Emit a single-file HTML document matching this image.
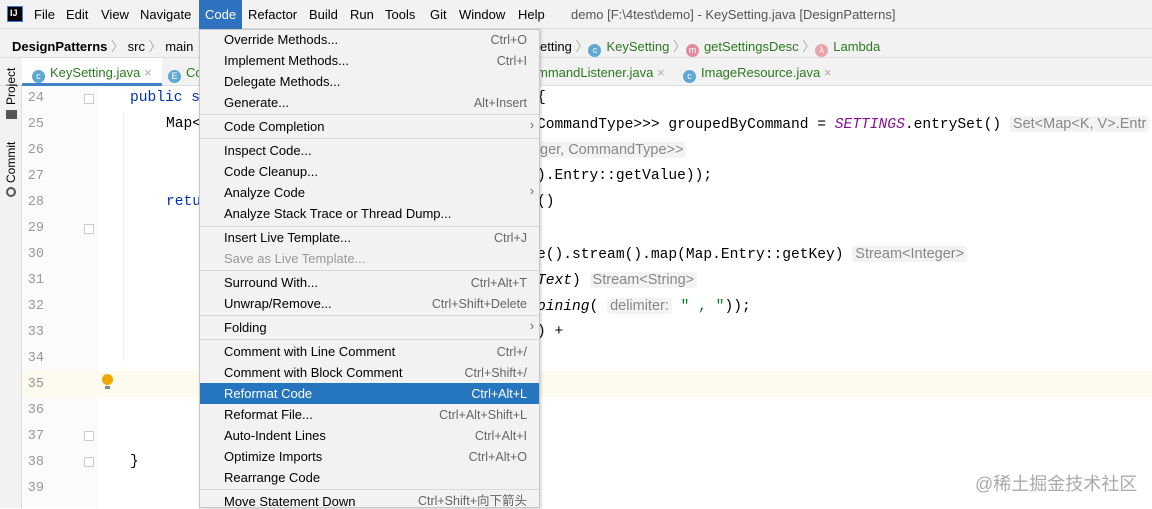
<!DOCTYPE html>
<html><head><meta charset="utf-8"><style>
*{margin:0;padding:0;box-sizing:border-box}
body{width:1152px;height:508px;overflow:hidden;background:#fff;font-family:"Liberation Sans","Noto Sans CJK SC",sans-serif;font-size:13px;color:#000;position:relative}
.a{position:absolute;white-space:nowrap}
.mono{font-family:"Liberation Mono",monospace;font-size:14.6px}
.ln{position:absolute;left:22px;width:22px;text-align:right;color:#999;font-family:"Liberation Mono",monospace;font-size:13.5px}
.hint{background:#f3f3f3;color:#888;font-family:"Liberation Sans",sans-serif;font-size:14.5px;padding:0 3px;border-radius:3px}
.mi{position:absolute;left:224px;font-size:13px;color:#000}
.sc{position:absolute;right:625px;font-size:12.5px;color:#666;text-align:right}
.sep{position:absolute;left:200px;width:339px;height:1px;background:#d8d8d8}
.ic{display:inline-block;width:13px;height:13px;border-radius:50%;color:#fff;font-size:9px;text-align:center;line-height:13px;vertical-align:-2px;margin-right:5px}
</style></head><body>
<div class="a" style="left:0;top:0;width:1152px;height:29px;background:#f2f2f2;border-bottom:1px solid #ddd"></div>
<div class="a" style="left:7px;top:6px;width:16px;height:16px;background:#000;color:#fff;font-size:9px;font-weight:bold;line-height:12px;padding-left:2px;border:1px solid #3a7bd5">IJ</div>
<div class="a" style="left:199px;top:0;width:43px;height:29px;background:#2f73c0"></div>
<div class="a" style="top:7px;left:34px;font-size:13px">File</div>
<div class="a" style="top:7px;left:66px">Edit</div>
<div class="a" style="top:7px;left:101px">View</div>
<div class="a" style="top:7px;left:140px">Navigate</div>
<div class="a" style="top:7px;left:205px;color:#fff">Code</div>
<div class="a" style="top:7px;left:248px">Refactor</div>
<div class="a" style="top:7px;left:309px">Build</div>
<div class="a" style="top:7px;left:350px">Run</div>
<div class="a" style="top:7px;left:385px">Tools</div>
<div class="a" style="top:7px;left:430px">Git</div>
<div class="a" style="top:7px;left:459px">Window</div>
<div class="a" style="top:7px;left:518px">Help</div>
<div class="a" style="top:7px;left:571px;color:#555">demo [F:\4test\demo] - KeySetting.java [DesignPatterns]</div>
<div class="a" style="left:0;top:29px;width:1152px;height:29px;background:#f2f2f2;border-bottom:1px solid #ddd"></div>
<div class="a" style="top:36px;left:12px;font-weight:bold">DesignPatterns <span style="font-weight:normal;color:#aaa">〉</span><span style="font-weight:normal"> src </span><span style="font-weight:normal;color:#aaa">〉</span><span style="font-weight:normal"> main</span></div>
<div class="a" style="top:36px;left:540px">etting <span style="color:#aaa">〉</span><span class="ic" style="background:#5fa8d3">c</span><span style="color:#2a7a1e">KeySetting</span> <span style="color:#aaa">〉</span><span class="ic" style="background:#e08c9c">m</span><span style="color:#2a7a1e">getSettingsDesc</span> <span style="color:#aaa">〉</span><span class="ic" style="background:#e8a3ad">λ</span><span style="color:#2a7a1e">Lambda</span></div>
<div class="a" style="left:0;top:58px;width:1152px;height:28px;background:#f2f2f2;border-bottom:1px solid #ddd"></div>
<div class="a" style="left:22px;top:58px;width:140px;height:28px;background:#fff;border-bottom:3px solid #4083c9"></div>
<div class="a" style="top:65px;left:32px"><span class="ic" style="background:#5fa8d3">c</span><span style="color:#2a7a1e">KeySetting.java</span> <span style="color:#aaa">×</span></div>
<div class="a" style="top:65px;left:168px"><span class="ic" style="background:#5fa8d3">E</span><span style="color:#2a7a1e">Co</span></div>
<div class="a" style="top:65px;left:537px"><span style="color:#2a7a1e">mmandListener.java</span> <span style="color:#aaa">×</span></div>
<div class="a" style="top:65px;left:683px"><span class="ic" style="background:#5fa8d3">c</span><span style="color:#2a7a1e">ImageResource.java</span> <span style="color:#aaa">×</span></div>
<div class="a" style="left:0;top:86px;width:22px;height:422px;background:#f2f2f2;border-right:1px solid #ddd"></div>
<div class="a" style="left:4px;top:105px;transform:rotate(-90deg);transform-origin:left top;font-size:12px">Project</div>
<div class="a" style="left:6px;top:110px;width:11px;height:9px;background:#555"></div>
<div class="a" style="left:4px;top:183px;transform:rotate(-90deg);transform-origin:left top;font-size:12px">Commit</div>
<div class="a" style="left:6px;top:187px;width:10px;height:10px;border:2px solid #555;border-radius:50%"></div>
<div class="a" style="left:22px;top:86px;width:76px;height:422px;background:#fbfbfb"></div>
<div class="a" style="left:22px;top:371px;width:1130px;height:26px;background:#fdfbee"></div>
<div class="a" style="left:102px;top:374px;width:11px;height:11px;border-radius:50%;background:#f0a800"></div>
<div class="a" style="left:105px;top:386px;width:5px;height:3px;background:#888"></div>
<div class="ln" style="top:91px">24</div><div class="ln" style="top:117px">25</div><div class="ln" style="top:143px">26</div><div class="ln" style="top:169px">27</div><div class="ln" style="top:195px">28</div><div class="ln" style="top:221px">29</div><div class="ln" style="top:247px">30</div><div class="ln" style="top:273px">31</div><div class="ln" style="top:299px">32</div><div class="ln" style="top:325px">33</div><div class="ln" style="top:351px">34</div><div class="ln" style="top:377px">35</div><div class="ln" style="top:403px">36</div><div class="ln" style="top:429px">37</div><div class="ln" style="top:455px">38</div><div class="ln" style="top:481px">39</div>
<div class="a" style="left:84px;top:94px;width:10px;height:10px;border:1px solid #ccc;background:#fff"></div>
<div class="a" style="left:84px;top:224px;width:10px;height:10px;border:1px solid #ccc;background:#fff"></div>
<div class="a" style="left:84px;top:431px;width:10px;height:10px;border:1px solid #ccc;background:#fff"></div>
<div class="a" style="left:84px;top:457px;width:10px;height:10px;border:1px solid #ccc;background:#fff"></div>
<div class="a" style="left:123px;top:112px;width:1px;height:250px;background:#eee"></div>
<div class="a mono" style="left:130px;top:90px;color:#0033b3">public s</div>
<div class="a mono" style="left:166px;top:116px">Map&lt;</div>
<div class="a mono" style="left:166px;top:194px;color:#0033b3">retu</div>
<div class="a mono" style="left:130px;top:454px">}</div>
<div class="a mono" style="left:537px;top:90px">{</div>
<div class="a mono" style="left:537px;top:116px">CommandType&gt;&gt;&gt; groupedByCommand = <i style="color:#871094">SETTINGS</i>.entrySet() <span class="hint">Set&lt;Map&lt;K, V&gt;.Entr</span></div>
<div class="a mono" style="left:537px;top:142px"><span class="hint">ger, CommandType&gt;&gt;</span></div>
<div class="a mono" style="left:537px;top:168px">).Entry::getValue));</div>
<div class="a mono" style="left:537px;top:194px">()</div>
<div class="a mono" style="left:537px;top:246px">e().stream().map(Map.Entry::getKey) <span class="hint">Stream&lt;Integer&gt;</span></div>
<div class="a mono" style="left:537px;top:272px"><i>Text</i>) <span class="hint">Stream&lt;String&gt;</span></div>
<div class="a mono" style="left:537px;top:298px"><i>oining</i>( <span class="hint">delimiter:</span> <span style="color:#067d17">" , "</span>));</div>
<div class="a mono" style="left:537px;top:324px">) +</div>
<div class="a" style="left:975px;top:470px;font-size:18px;color:#aaa">@稀土掘金技术社区</div>
<div class="a" style="left:199px;top:29px;width:341px;height:479px;background:#f2f2f2;border:1px solid #c8c8c8;box-shadow:1px 1px 3px rgba(0,0,0,.2)"></div>
<div class="a" style="left:200px;top:383px;width:339px;height:21px;background:#2675bf"></div>
<div class="sep" style="top:114px"></div><div class="sep" style="top:138px"></div><div class="sep" style="top:226px"></div><div class="sep" style="top:270px"></div><div class="sep" style="top:315px"></div><div class="sep" style="top:339px"></div><div class="sep" style="top:489px"></div>
<div class="mi" style="top:32px">Override Methods...</div><div class="sc" style="top:33px">Ctrl+O</div>
<div class="mi" style="top:53px">Implement Methods...</div><div class="sc" style="top:54px">Ctrl+I</div>
<div class="mi" style="top:74px">Delegate Methods...</div>
<div class="mi" style="top:95px">Generate...</div><div class="sc" style="top:96px">Alt+Insert</div>
<div class="mi" style="top:119px">Code Completion</div><div class="sc" style="top:118px;right:618px">›</div>
<div class="mi" style="top:143px">Inspect Code...</div>
<div class="mi" style="top:164px">Code Cleanup...</div>
<div class="mi" style="top:185px">Analyze Code</div><div class="sc" style="top:184px;right:618px">›</div>
<div class="mi" style="top:206px">Analyze Stack Trace or Thread Dump...</div>
<div class="mi" style="top:230px">Insert Live Template...</div><div class="sc" style="top:231px">Ctrl+J</div>
<div class="mi" style="top:251px;color:#999">Save as Live Template...</div>
<div class="mi" style="top:275px">Surround With...</div><div class="sc" style="top:276px">Ctrl+Alt+T</div>
<div class="mi" style="top:296px">Unwrap/Remove...</div><div class="sc" style="top:297px">Ctrl+Shift+Delete</div>
<div class="mi" style="top:320px">Folding</div><div class="sc" style="top:319px;right:618px">›</div>
<div class="mi" style="top:344px">Comment with Line Comment</div><div class="sc" style="top:345px">Ctrl+/</div>
<div class="mi" style="top:365px">Comment with Block Comment</div><div class="sc" style="top:366px">Ctrl+Shift+/</div>
<div class="mi" style="top:386px;color:#fff">Reformat Code</div><div class="sc" style="top:387px;color:#fff">Ctrl+Alt+L</div>
<div class="mi" style="top:407px">Reformat File...</div><div class="sc" style="top:408px">Ctrl+Alt+Shift+L</div>
<div class="mi" style="top:428px">Auto-Indent Lines</div><div class="sc" style="top:429px">Ctrl+Alt+I</div>
<div class="mi" style="top:449px">Optimize Imports</div><div class="sc" style="top:450px">Ctrl+Alt+O</div>
<div class="mi" style="top:470px">Rearrange Code</div>
<div class="mi" style="top:494px">Move Statement Down</div><div class="sc" style="top:494px;line-height:15px">Ctrl+Shift+向下箭头</div>
</body></html>
